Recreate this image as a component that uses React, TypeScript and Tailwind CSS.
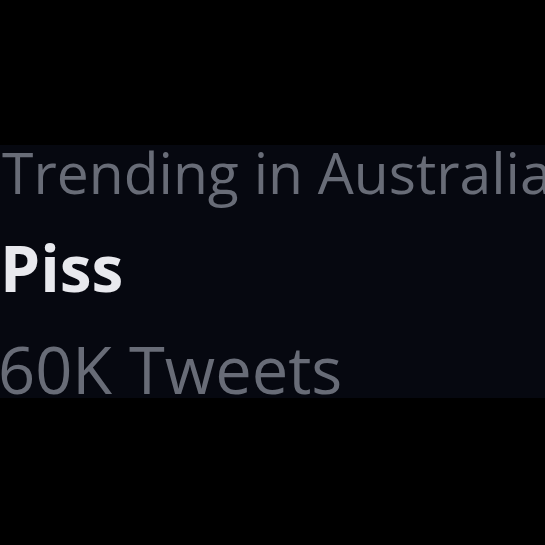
export default function App() {
  return (
    <div className="flex h-[545px] w-[545px] flex-col overflow-hidden bg-black">
      <div
        className="mt-[145px] flex h-[253px] flex-col overflow-hidden bg-[#060810] whitespace-nowrap"
        style={{ fontFamily: '"Open Sans", "Noto Sans", sans-serif' }}
      >
        <p className="pl-[2px] text-[57px] leading-[54px] text-[#686c77]">Trending in Australia</p>
        <p className="mt-[19px] text-[64px] font-bold leading-[100px] text-[#e8e9ee]">Piss</p>
        <p className="-ml-[2px] mt-[11px] text-[65px] leading-[80px] text-[#686c77]">60K Tweets</p>
      </div>
    </div>
  );
}
